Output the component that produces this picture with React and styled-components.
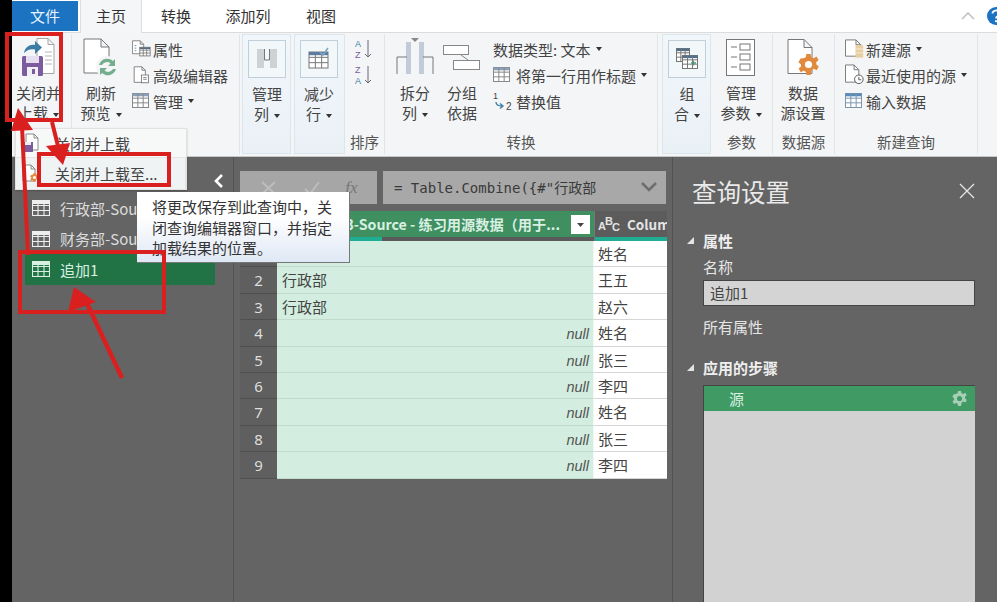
import React from "react";
import styled, { createGlobalStyle } from "styled-components";

const Global = createGlobalStyle`
  html, body { margin: 0; padding: 0; background: #646464; }
  body { width: 997px; height: 602px; overflow: hidden; font-family: "Noto Sans CJK SC", "Liberation Sans", sans-serif; }
  * { box-sizing: border-box; }
`;

const Page = styled.div`position: relative; display: flex; width: 997px; height: 602px; overflow: hidden; background: #646464;`;
const Strip = styled.div`width: 12px; background: #000; flex: none;`;
const Main = styled.div`flex: 1; min-width: 0; display: flex; flex-direction: column;`;

const Tabs = styled.div`height: 32px; display: flex; background: #fff; position: relative; flex: none; font-size: 15px;`;
const FileTab = styled.div`width: 66px; height: 30px; margin-top: 1px; padding-bottom: 2px; background: #1b73c2; color: #e8f3fb; display: flex; align-items: center; justify-content: center;`;
const Tab = styled.div`
  width: ${p => p.$w}px; margin-left: ${p => p.$ml || 0}px; height: 33px; padding-bottom: 3px; display: flex; align-items: center; justify-content: center; color: #333; position: relative; z-index: 1;
  ${p => p.$active && `background: #f4f6f8; border: 1px solid #dedede; border-bottom: none; border-top: none;`}
`;
const TabEnd = styled.div`margin-left: auto; display: flex; align-items: center; gap: 12px; margin-right: -8px;`;

const Ribbon = styled.div`height: 125px; flex: none; display: flex; background: #f3f5f7; border-top: 1px solid #dcdcdc; border-bottom: 1px solid #c8c8c8;`;
const Group = styled.section`
  width: ${p => p.$w}px; flex: none; display: flex; flex-direction: column; margin-top: 1px; margin-bottom: 2px;
  border-right: 1px solid #e2e5e8;
  ${p => p.$hl && `background: linear-gradient(#f1f6fa, #eaf1f6); border: 1px solid #dbe5ec;`}
  margin-left: ${p => p.$ml || 0}px;
`;
const GroupBody = styled.div`flex: 1; display: flex; padding-left: ${p => p.$pl || 0}px; gap: ${p => p.$gap || 0}px; min-height: 0;`;
const GroupLabel = styled.div`height: 22px; flex: none; text-align: center; font-size: 14.5px; line-height: 20px; color: #555;`;

const Big = styled.div`width: ${p => p.$w || 48}px; flex: none; display: flex; flex-direction: column; align-items: center; font-size: 15px; color: #444; line-height: 20px;`;
const BigIcon = styled.div`height: 46px; display: flex; align-items: flex-start; justify-content: center; padding-top: ${p => p.$pt ?? 4}px; margin-bottom: 3px;`;
const BoxIcon = styled.div`width: 38px; height: 38px; margin-top: 5px; margin-bottom: 6px; border: 1px solid #bfd0dc; background: #f2f7fa; display: flex; align-items: center; justify-content: center;`;
const Caret = styled.span`display: inline-block; width: 0; height: 0; border-left: 3.5px solid transparent; border-right: 3.5px solid transparent; border-top: 4px solid #333; margin-left: 5px; vertical-align: middle;`;
const Line = styled.div`white-space: nowrap; text-align: center;`;

const SmallCol = styled.div`display: flex; flex-direction: column; padding-top: 2px; margin-left: ${p => p.$ml || 0}px;`;
const Small = styled.div`height: 26px; display: flex; align-items: center; font-size: 15px; color: #444; white-space: nowrap;`;
const SmallIcon = styled.span`width: ${p => p.$w || 23}px; flex: none; display: flex; align-items: center;`;

const Body = styled.div`flex: 1; display: flex; min-height: 0; background: #646464;`;
const Queries = styled.aside`width: 222px; flex: none; border-right: 1px solid #525252; padding: 36px 18px 0 13px;`;
const QueryRow = styled.div`height: 30.5px; display: flex; align-items: center; gap: 10px; padding-left: 7px; font-size: 15px; color: ${p => p.$sel ? "#d7f0e0" : "#dcdcdc"}; background: ${p => p.$sel ? "#217346" : "transparent"}; white-space: nowrap; overflow: hidden;`;
const Center = styled.main`width: 439px; flex: none; border-right: 1px solid #525252; padding: 14px 6px 0 6px;`;
const FormulaBar = styled.div`display: flex; gap: 6px; height: 33px;`;
const FxBox = styled.div`width: 137px; background: #a6a6a6; display: flex; align-items: center; justify-content: space-around; padding: 0 8px;`;
const FxLabel = styled.span`font-family: "Liberation Serif", serif; font-style: italic; font-size: 17px; color: #777;`;
const FormulaBox = styled.div`width: 283px; background: #a8a8a8; display: flex; align-items: flex-start; justify-content: space-between; padding: 6px 8px 0 11px; font-family: "DejaVu Sans Mono", "Noto Sans CJK SC", monospace; font-size: 14px; color: #3a3a3a; white-space: nowrap; overflow: hidden;`;
const Chevron = styled.svg`margin-top: 4px; flex: none;`;

const Table = styled.div`margin-top: 7px; display: grid; grid-template-columns: 37px 317px 73px; grid-template-rows: 30px; grid-auto-rows: 26.4px; width: 427px;`;
const Corner = styled.div`background: #5a5a5a;`;
const HeadMain = styled.div`background: linear-gradient(to right, #1fae93 105px, #5a5a5a 105px) bottom / 100% 4px no-repeat, #3f8f60; display: flex; align-items: flex-start; justify-content: flex-end; padding: 4px 4px 0 0; color: #d8f0e2; font-size: 14.2px; font-weight: 700; line-height: 18px; white-space: nowrap; overflow: hidden; gap: 11px;`;
const FilterBtn = styled.div`width: 19px; height: 19px; background: #fff; display: flex; align-items: center; justify-content: center; flex: none;`;
const HeadSide = styled.div`background: linear-gradient(#1fae93, #1fae93) bottom / 100% 4px no-repeat, #5c5c5c; display: flex; align-items: flex-start; gap: 5px; padding: 4px 0 0 3px; color: #e4e4e4; font-size: 13.5px; font-weight: 700; line-height: 18px; overflow: hidden; white-space: nowrap; border-left: 1px solid #777;`;
const AbcIcon = styled.svg`flex: none;`;
const Num = styled.div`background: #5f5f5f; color: #dedede; font-size: 15px; text-align: center; line-height: 26px; border-bottom: 1px solid #4f4f4f; font-family: "Noto Sans", sans-serif;`;
const Cell = styled.div`background: #d3eee0; color: #444; font-size: 15px; padding: 0 4px 0 5px; line-height: 26px; border-bottom: 1px solid #c1dccd; border-right: 1px solid #f0f8f3;`;
const NullCell = styled(Cell)`text-align: right; font-family: "Liberation Sans", sans-serif; font-style: italic; font-size: 14.5px; line-height: 28px; color: #555;`;
const Side = styled.div`background: #fff; color: #444; font-size: 15px; padding-left: 4px; line-height: 26px; border-bottom: 1px solid #d6d6d6; white-space: nowrap;`;

const Settings = styled.aside`flex: 1; padding: 14px 22px 0 30px; color: #eee; display: flex; flex-direction: column; min-width: 0;`;
const SetHead = styled.div`display: flex; align-items: center; justify-content: space-between; height: 40px; font-size: 24.5px; color: #eaeaea; margin-left: -11px;`;
const Section = styled.div`position: relative; font-size: 15px; font-weight: 700; color: #efefef; line-height: 20px; margin-top: ${p => p.$mt}px; display: flex; align-items: center;`;
const Tri = styled.span`position: absolute; left: -16px; top: 6px; width: 0; height: 0; border-bottom: 7px solid #e4e4e4; border-left: 7px solid transparent;`;
const Plain = styled.div`font-size: 15px; color: #e6e6e6; line-height: 20px; margin-top: ${p => p.$mt}px;`;
const NameInput = styled.div`width: 272px; height: 26px; margin-top: 3px; background: #d4d4d4; border: 1px solid #444; color: #444; font-size: 15px; line-height: 24px; padding-left: 6px;`;
const Steps = styled.div`width: 272px; flex: 1; margin-top: 7px; background: #d2d2d2; border-top: 1px solid #444; border-left: 1px solid #444;`;
const Step = styled.div`height: 25px; background: #3f9a63; color: #d8f1e2; font-size: 15px; padding: 0 8px 0 25px; display: flex; align-items: center; justify-content: space-between;`;

const Menu = styled.div`position: absolute; left: 15px; top: 128px; width: 172px; height: 62px; background: #f7f8f8; border: 1px solid #e2e2e2; box-shadow: 0 1px 2px rgba(0,0,0,.2); font-size: 15px; color: #444;`;
const MenuItem = styled.div`height: ${p => p.$hot ? 32 : 28}px; display: flex; align-items: center; gap: 16px; padding-left: 6px; white-space: nowrap; ${p => p.$hot && `background:#f0f3f3; border-top:1px solid #e4e4e4; border-right:1px solid #e4e4e4;`}`;
const Tip = styled.div`position: absolute; left: 137px; top: 192px; width: 213px; height: 71px; padding: 5px 0 0 15px; background: linear-gradient(#fff 35%, #dfe8f5); border: 1px solid #777; border-width: 0 1px 1px 0; font-size: 15px; line-height: 20.5px; color: #333; white-space: pre;`;
const Collapse = styled.svg`position: absolute; left: 212px; top: 172px;`;
const Marks = styled.svg`position: absolute; left: 0; top: 0; pointer-events: none;`;

const Doc = ({ x = 0, y = 0, w = 24, h = 34, fold = 8, stroke = "#666" }) => (
  <path d={`M${x} ${y}h${w - fold}l${fold} ${fold}v${h - fold}h${-w}zM${x + w - fold} ${y}v${fold}h${fold}`} fill="#fff" stroke={stroke} strokeWidth="1" />
);
const Grid = ({ x, y, w, h, head = "#5b7fa6", line = "#777", rows = 3, cols = 3 }) => {
  const cells = [];
  for (let i = 1; i < rows; i++) cells.push(<path key={"r" + i} d={`M${x} ${y + (h * i) / rows}h${w}`} stroke={line} />);
  for (let i = 1; i < cols; i++) cells.push(<path key={"c" + i} d={`M${x + (w * i) / cols} ${y}v${h}`} stroke={line} />);
  return <g fill="none"><rect x={x} y={y} width={w} height={h} fill="#fff" stroke={line} /><rect x={x} y={y} width={w} height={h / rows * .6} fill={head} />{cells}</g>;
};
const TableIcon = ({ c = "#eee" }) => (
  <svg width="18" height="16" viewBox="0 0 18 16"><g fill="none" stroke={c} strokeWidth="1.1"><rect x=".5" y=".5" width="17" height="15" /><path d="M.5 5.5h17M.5 10.5h17M6 1v14M12 1v14" /></g><rect x="0" y="0" width="18" height="4" fill={c} /></svg>
);
const CloseLoad = () => (
  <svg width="33" height="38" viewBox="0 0 33 38">
    <Doc x={15} y={.5} w={17} h={35} fold={6} stroke="#a5a5a5" />
    <path d="M23 14h7M23 18h7M23 22h7M23 26h7" stroke="#b5b5b5" />
    <path d="M2 15c1-6 6-9 11-8V3l7 6.500-7 6.500v-4.500c-4-1-8 0-11 3.500z" fill="#3b7da3" />
    <rect x="0" y="18" width="21" height="20" rx="1.5" fill="#7d5c9e" />
    <rect x="4" y="18" width="13" height="7" fill="#e5dff0" />
    <rect x="5" y="29" width="11" height="9" fill="#f2f0f6" /><rect x="10" y="31" width="3" height="5" fill="#7d5c9e" />
  </svg>
);
const Refresh = () => (
  <svg width="36" height="40" viewBox="0 0 36 40">
    <Doc x={1} y={1} w={25} h={34} fold={8} stroke="#777" />
    <circle cx="24" cy="29" r="11" fill="#f3f5f7" />
    <path d="M16 27a8.5 8.5 0 0 1 14-4l2-2v7h-7l2.500-2.500a5.500 5.500 0 0 0-8.500 1.500zM33 31a8.500 8.500 0 0 1-14 4l-2 2v-7h7l-2.500 2.500a5.500 5.500 0 0 0 8.500-1.500z" fill="#75ad8f" />
  </svg>
);
const Props = () => (
  <svg width="19" height="18" viewBox="0 0 22 20"><Doc x={.5} y={.5} w={13} h={15} fold={4} stroke="#777" /><path d="M3 6h2M3 9h2M3 12h2" stroke="#5b8aa0" /><Grid x={9} y={8} w={12} h={10} head="#5a6b80" /></svg>
);
const Adv = () => (
  <svg width="19" height="18" viewBox="0 0 22 20"><Doc x={2.5} y={.5} w={13} h={18} fold={4} stroke="#777" /><rect x="11" y="10" width="8" height="9" fill="#fff" stroke="#777" /><path d="M13 13h4M13 15h4" stroke="#777" /></svg>
);
const ManageIco = () => <svg width="17" height="16" viewBox="0 0 17 16"><Grid x={.5} y={.5} w={16} h={14} head="#8aa0b8" rows={3} cols={3} line="#888" /></svg>;
const ColsIco = () => (
  <svg width="22" height="22" viewBox="0 0 22 22"><rect x="1" y="1" width="7" height="19" fill="#cfd2d4" /><rect x="14" y="1" width="7" height="19" fill="#cfd2d4" /><path d="M8.500 1v11h5V1" fill="none" stroke="#777" /></svg>
);
const RowsIco = () => (
  <svg width="24" height="24" viewBox="0 0 24 24"><Grid x={2} y={5} w={19} h={16} head="#5a7ba3" line="#777" rows={3} cols={3} /><path d="M13 5l3 3 5-7" fill="none" stroke="#7fa6c0" strokeWidth="1.6" /></svg>
);
const Sort = ({ top, bot, c1, c2 }) => (
  <svg width="20" height="20" viewBox="0 0 20 20">
    <text x="0" y="8" fontSize="9" fontFamily="Liberation Sans" fill={c1}>{top}</text>
    <text x="0" y="19" fontSize="9" fontFamily="Liberation Sans" fill={c2}>{bot}</text>
    <path d="M13 1v17M10 15l3 3 3-3" fill="none" stroke="#667" />
  </svg>
);
const Split = () => (
  <svg width="38" height="38" viewBox="0 0 38 38">
    <path d="M15 0h8l-4 4z" fill="#888" />
    <rect x="10" y="4" width="5" height="32" fill="#c2ccd8" /><rect x="23" y="4" width="5" height="32" fill="#c2ccd8" />
    <path d="M1 36V19h10M37 36V19H27" fill="none" stroke="#777" />
  </svg>
);
const GroupBy = () => (
  <svg width="38" height="26" viewBox="0 0 38 26"><rect x=".5" y=".5" width="25" height="9" fill="#fff" stroke="#888" /><rect x="10.500" y="15.500" width="26" height="9" fill="#fff" stroke="#888" /><path d="M18 10l7 5" stroke="#888" /></svg>
);
const Replace = () => (
  <svg width="20" height="22" viewBox="0 0 20 22">
    <text x="0" y="9" fontSize="9" fontFamily="Liberation Sans" fill="#444">1</text>
    <text x="13" y="20" fontSize="10" fontFamily="Liberation Sans" fill="#444">2</text>
    <path d="M3 12c0 3 2 4 6 4M7 13.500l3 2.500-3 2.500" fill="none" stroke="#3b7da3" strokeWidth="1.3" />
  </svg>
);
const MergeIco = () => (
  <svg width="22" height="22" viewBox="0 0 22 22"><Grid x={.5} y={.5} w={13} h={13} head="#51708c" /><Grid x={6.5} y={7.5} w={15} h={13} head="#51708c" /><path d="M15 15h5M17.500 12.500v5" stroke="#4f9a78" strokeWidth="1.3" /></svg>
);
const Params = () => (
  <svg width="30" height="37" viewBox="0 0 30 37"><rect x=".5" y=".5" width="28" height="36" fill="#fff" stroke="#777" /><g fill="none" stroke="#777"><rect x="14" y="5" width="10" height="6" /><rect x="14" y="15" width="10" height="6" /><rect x="14" y="25" width="10" height="6" /><path d="M5 8h6M5 18h6M5 28h6" /></g></svg>
);
const Gear = ({ c, s, hole = "#fff" }) => (
  <svg width={s} height={s} viewBox="0 0 20 20"><path d="M8 0h4l.6 3 2.400 1 2.600-1.600 2 3.400-2.300 2 .2 2.200 2.300 2-2 3.400-2.800-1.400-2 1.200L12 20H8l-.6-3-2-1.100-2.800 1.400-2-3.400 2.300-2-.2-2.100-2.300-2 2-3.400L5 4l2.400-1z" fill={c} /><circle cx="10" cy="10" r="3.400" fill={hole} /></svg>
);
const DataSrc = () => (
  <svg width="33" height="38" viewBox="0 0 33 38"><Doc x={1} y={.5} w={24} h={34} fold={8} stroke="#777" /><g transform="translate(11 15)"><Gear c="#e18a3d" s="21" /></g></svg>
);
const NewSrc = () => (
  <svg width="22" height="20" viewBox="0 0 22 20"><Doc x={.5} y={.5} w={16} h={17} fold={5} stroke="#777" /><rect x="11" y="6" width="8" height="13" fill="#e8cfa0" /><path d="M11 10h8M11 14h8" stroke="#f4ead7" /></svg>
);
const Recent = () => (
  <svg width="22" height="22" viewBox="0 0 22 22"><Doc x={.5} y={.5} w={14} h={18} fold={5} stroke="#777" /><circle cx="14.500" cy="15.500" r="4.500" fill="#fff" stroke="#555" /><path d="M14.500 13v3h2.500" fill="none" stroke="#555" /></svg>
);
const Enter = () => <svg width="17" height="16" viewBox="0 0 17 16"><Grid x={.5} y={.5} w={16} h={14} head="#5b8ab8" line="#7c95ad" /></svg>;
const Down = ({ c = "#444" }) => <svg width="9" height="6" viewBox="0 0 9 6"><path d="M1 1h7L4.500 5z" fill={c} /></svg>;

function Bigs({ lines, caret }) {
  return lines.map((l, i) => <Line key={i}>{l}{caret && i === lines.length - 1 && <Caret />}</Line>);
}

const rows = [
  [2, "行政部", "王五"], [3, "行政部", "赵六"], [4, null, "姓名"], [5, null, "张三"], [6, null, "李四"], [7, null, "姓名"], [8, null, "张三"], [9, null, "李四"],
];

export default function App() {
  return (
    <Page>
      <Global />
      <Strip />
      <Main>
        <Tabs>
          <FileTab>文件</FileTab>
          <Tab $w={62} $ml={2} $active>主页</Tab>
          <Tab $w={68}>转换</Tab>
          <Tab $w={76}>添加列</Tab>
          <Tab $w={70}>视图</Tab>
          <TabEnd>
            <svg width="14" height="8" viewBox="0 0 14 8"><path d="M1 7l6-6 6 6" fill="none" stroke="#bbb" strokeWidth="1.4" /></svg>
            <svg width="18" height="18" viewBox="0 0 18 18"><circle cx="9" cy="9" r="9" fill="#1b73c2" /><path d="M5.500 6.500a3.500 3 0 1 1 5 2.700c-1 .6-1.500 1.100-1.500 2.300" fill="none" stroke="#fff" strokeWidth="1.800" /><circle cx="9" cy="14.200" r="1.100" fill="#fff" /></svg>
          </TabEnd>
        </Tabs>
        <Ribbon>
          <Group $w={60}>
            <GroupBody><Big $w={53}><BigIcon><CloseLoad /></BigIcon><Bigs lines={["关闭并", "上载"]} caret /></Big></GroupBody>
          </Group>
          <Group $w={168}>
            <GroupBody $pl={4} $gap={6}>
              <Big $w={50}><BigIcon><Refresh /></BigIcon><Bigs lines={["刷新", "预览"]} caret /></Big>
              <SmallCol>
                <Small><SmallIcon $w={21}><Props /></SmallIcon>属性</Small>
                <Small><SmallIcon $w={21}><Adv /></SmallIcon>高级编辑器</Small>
                <Small><SmallIcon $w={21}><ManageIco /></SmallIcon>管理<Caret /></Small>
              </SmallCol>
            </GroupBody>
          </Group>
          <Group $w={49} $ml={2} $hl>
            <GroupBody><Big><BoxIcon><ColsIco /></BoxIcon><Bigs lines={["管理", "列"]} caret /></Big></GroupBody>
          </Group>
          <Group $w={51} $ml={3} $hl>
            <GroupBody><Big><BoxIcon><RowsIco /></BoxIcon><Bigs lines={["减少", "行"]} caret /></Big></GroupBody>
          </Group>
          <Group $w={40}>
            <GroupBody $pl={10}>
              <SmallCol>
                <Small><Sort top="A" bot="Z" c1="#3b7da3" c2="#7d5c9e" /></Small>
                <Small><Sort top="Z" bot="A" c1="#7d5c9e" c2="#3b7da3" /></Small>
              </SmallCol>
            </GroupBody>
            <GroupLabel>排序</GroupLabel>
          </Group>
          <Group $w={273}>
            <GroupBody $pl={8}>
              <Big $w={44}><BigIcon><Split /></BigIcon><Bigs lines={["拆分", "列"]} caret /></Big>
              <Big $w={50}><BigIcon $pt={11}><GroupBy /></BigIcon><Bigs lines={["分组", "依据"]} /></Big>
              <SmallCol $ml={6}>
                <Small>数据类型: 文本<Caret /></Small>
                <Small><SmallIcon><ManageIco /></SmallIcon>将第一行用作标题<Caret /></Small>
                <Small><SmallIcon><Replace /></SmallIcon>替换值</Small>
              </SmallCol>
            </GroupBody>
            <GroupLabel>转换</GroupLabel>
          </Group>
          <Group $w={49} $ml={4} $hl>
            <GroupBody><Big><BoxIcon><MergeIco /></BoxIcon><Bigs lines={["组", "合"]} caret /></Big></GroupBody>
          </Group>
          <Group $w={62}>
            <GroupBody><Big $w={60}><BigIcon $pt={5}><Params /></BigIcon><Bigs lines={["管理", "参数"]} caret /></Big></GroupBody>
            <GroupLabel>参数</GroupLabel>
          </Group>
          <Group $w={62}>
            <GroupBody><Big $w={60}><BigIcon $pt={5}><DataSrc /></BigIcon><Bigs lines={["数据", "源设置"]} /></Big></GroupBody>
            <GroupLabel>数据源</GroupLabel>
          </Group>
          <Group $w={143}>
            <GroupBody $pl={10}>
              <SmallCol>
                <Small><SmallIcon $w={21}><NewSrc /></SmallIcon>新建源<Caret /></Small>
                <Small><SmallIcon $w={21}><Recent /></SmallIcon>最近使用的源<Caret /></Small>
                <Small><SmallIcon $w={21}><Enter /></SmallIcon>输入数据</Small>
              </SmallCol>
            </GroupBody>
            <GroupLabel>新建查询</GroupLabel>
          </Group>
        </Ribbon>
        <Body>
          <Queries>
            <QueryRow><TableIcon />行政部-Sou</QueryRow>
            <QueryRow><TableIcon />财务部-Sou</QueryRow>
            <QueryRow $sel><TableIcon c="#d7f0e0" />追加1</QueryRow>
          </Queries>
          <Center>
            <FormulaBar>
              <FxBox>
                <svg width="20" height="16" viewBox="0 0 20 16"><path d="M3 2l13 12M16 2L3 14" stroke="#bdbdbd" strokeWidth="2" /></svg>
                <svg width="20" height="16" viewBox="0 0 20 16"><path d="M3 9l5 5 9-12" fill="none" stroke="#bdbdbd" strokeWidth="2" /></svg>
                <FxLabel>fx</FxLabel>
              </FxBox>
              <FormulaBox>
                <span>= Table.Combine({"{"}#"行政部</span>
                <Chevron width="18" height="12" viewBox="0 0 18 12"><path d="M2 2l7 7 7-7" fill="none" stroke="#6e6e6e" strokeWidth="2.600" /></Chevron>
              </FormulaBox>
            </FormulaBar>
            <Table>
              <Corner />
              <HeadMain><span>3-Source - 练习用源数据（用于...</span><FilterBtn><Down /></FilterBtn></HeadMain>
              <HeadSide>
                <AbcIcon width="24" height="18" viewBox="0 0 24 18"><text x="0" y="15" fontSize="11" fontFamily="Liberation Sans" fill="#e4e4e4">A</text><text x="7" y="10" fontSize="11" fontFamily="Liberation Sans" fill="#e4e4e4">B</text><text x="14" y="16" fontSize="11" fontFamily="Liberation Sans" fill="#e4e4e4">C</text></AbcIcon>
                Column
              </HeadSide>
              <Num /><Cell /><Side>姓名</Side>
              {rows.map(r => (
                <React.Fragment key={r[0]}>
                  <Num>{r[0]}</Num>
                  {r[1] ? <Cell>{r[1]}</Cell> : <NullCell>null</NullCell>}
                  <Side>{r[2]}</Side>
                </React.Fragment>
              ))}
            </Table>
          </Center>
          <Settings>
            <SetHead>查询设置
              <svg width="16" height="16" viewBox="0 0 16 16"><path d="M1 1l14 14M15 1L1 15" stroke="#e6e6e6" strokeWidth="1.300" /></svg>
            </SetHead>
            <Section $mt={20}><Tri />属性</Section>
            <Plain $mt={6}>名称</Plain>
            <NameInput>追加1</NameInput>
            <Plain $mt={11}>所有属性</Plain>
            <Section $mt={21}><Tri />应用的步骤</Section>
            <Steps>
              <Step>源<Gear c="#a8cfb6" s="15" hole="#3f9a63" /></Step>
            </Steps>
          </Settings>
        </Body>
      </Main>

      <Collapse width="14" height="18" viewBox="0 0 14 18"><path d="M10 3L4 9l6 6" fill="none" stroke="#fff" strokeWidth="2.600" /></Collapse>
      <Menu>
        <MenuItem>
          <svg width="17" height="20" viewBox="0 0 17 20"><Doc x={4} y={1} w={12} h={16} fold={4} stroke="#888" /><rect x="1" y="9" width="10" height="10" fill="#7d5c9e" /><rect x="3" y="9" width="6" height="3" fill="#eee" /></svg>
          <span>关闭并上载</span>
        </MenuItem>
        <MenuItem $hot>
          <svg width="17" height="20" viewBox="0 0 17 20"><Doc x={1} y={1} w={12} h={16} fold={4} stroke="#888" /><g transform="translate(8 9)"><Gear c="#e18a3d" s="9" /></g></svg>
          <span>关闭并上载至...</span>
        </MenuItem>
      </Menu>
      <Tip>{"将更改保存到此查询中，关\n闭查询编辑器窗口，并指定\n加载结果的位置。"}</Tip>
      <Marks width="997" height="602" viewBox="0 0 997 602">
        <g fill="none" stroke="#d9201f" strokeWidth="4">
          <rect x="7" y="34" width="54" height="86" />
          <rect x="39" y="154" width="130" height="31" />
          <rect x="20" y="252" width="144" height="60" />
        </g>
        <g fill="#d9201f">
          <path d="M22 126L28 255" stroke="#d9201f" strokeWidth="4" />
          <path d="M18 108L33 130 11 131z" />
          <path d="M52 122L59 150" stroke="#d9201f" strokeWidth="4" />
          <path d="M63 165L46 146 70 143z" />
          <path d="M122 378L84 297" stroke="#d9201f" strokeWidth="4.500" />
          <path d="M74 287L96 302 68 312z" />
        </g>
      </Marks>
    </Page>
  );
}
